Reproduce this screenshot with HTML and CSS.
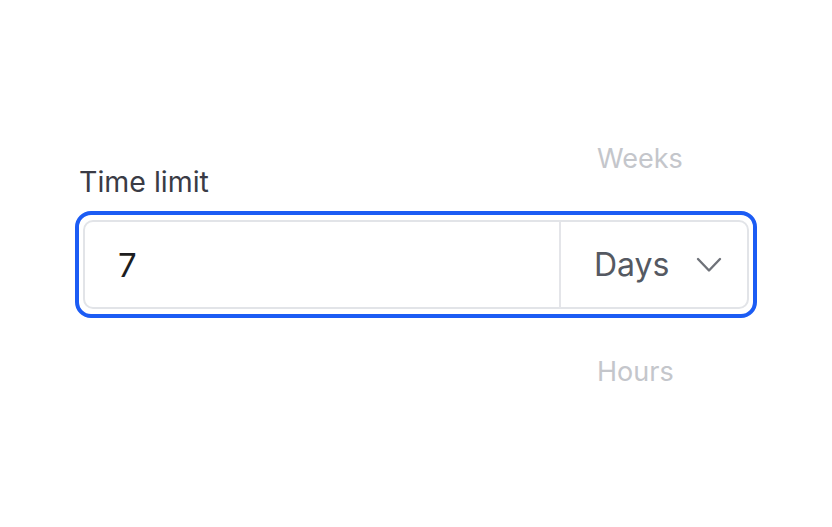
FILE: index.html
```html
<!DOCTYPE html>
<html lang="en">

<head>
    <title>Time limit</title>
    <link rel="stylesheet" href="styles.css">
</head>

<body>
    <div class="page">
        <label class="field-label" for="TimeValue">Time limit</label>

        <!-- Focused input with a unit picker on the right -->
        <div class="focus-ring">
            <div class="field">
                <input type="text" id="TimeValue" class="value-input" value="7">
                <div class="unit-select">
                    <span class="unit-current">Days</span>
                    <svg class="chevron" width="26" height="16" viewBox="0 0 26 16">
                        <polyline points="2,2 13,13.5 24,2" fill="none" stroke="#6f7279" stroke-width="2.4"
                            stroke-linecap="round" stroke-linejoin="round" />
                    </svg>

                    <!-- Neighbouring wheel options above and below the current unit -->
                    <div class="unit-wheel">
                        <span class="unit-option">Weeks</span>
                        <span class="unit-option">Hours</span>
                    </div>
                </div>
            </div>
        </div>
    </div>
</body>

</html>
```

FILE: styles.css
```css
body {
    margin: 0;
    background-color: #ffffff;
    font-family: Inter, "Noto Sans", sans-serif;
}

.page {
    display: flex;
    flex-direction: column;
    align-items: flex-start;
    box-sizing: border-box;
    min-height: 100vh;
    padding-top: 164px;
    padding-left: 75px;
}

.field-label {
    display: block;
    margin-left: 4px;
    margin-bottom: 11px;
    font-size: 28.5px;
    line-height: 36px;
    color: #3a3b45;
}

.focus-ring {
    box-sizing: border-box;
    width: 682px;
    padding: 5px 4px;
    border: 4px solid #1c5cf4;
    border-radius: 16px;
    background-color: #ffffff;
}

.field {
    box-sizing: border-box;
    display: flex;
    height: 89px;
    border: 2px solid #e2e4e8;
    border-radius: 10px;
}

.value-input {
    flex: 1;
    min-width: 0;
    padding: 0 0 0 33px;
    border: none;
    outline: none;
    background: transparent;
    font-family: inherit;
    font-size: 33px;
    color: #1d1d20;
}

.unit-select {
    position: relative;
    display: flex;
    align-items: center;
    width: 188px;
    padding-left: 33px;
    box-sizing: border-box;
    border-left: 2px solid #e4e5e9;
    font-size: 32px;
    color: #555962;
}

.unit-current {
    line-height: 40px;
}

.chevron {
    margin-left: 27px;
}

.unit-wheel {
    position: absolute;
    top: -81px;
    left: 36px;
    display: flex;
    flex-direction: column;
    gap: 177px;
}

.unit-option {
    font-size: 27px;
    line-height: 36px;
    color: #c4c6cb;
}
```
